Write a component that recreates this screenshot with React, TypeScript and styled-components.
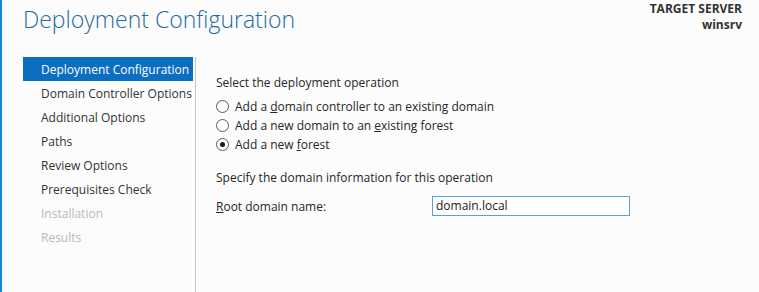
import React from "react";
import styled, { createGlobalStyle } from "styled-components";

const Global = createGlobalStyle`
  html, body { margin: 0; padding: 0; background: #fcfcfc; }
  body { font-family: "Open Sans", "Noto Sans", sans-serif; }
`;

const Window = styled.div`
  width: 759px;
  height: 292px;
  box-sizing: border-box;
  border-left: 2px solid #1688da;
  background: #fcfcfc;
  display: flex;
  flex-direction: column;
  overflow: hidden;
  color: #262626;
`;

const Header = styled.header`
  display: flex;
  justify-content: space-between;
  align-items: flex-start;
  height: 57px;
  padding: 0 17px 0 21px;
`;

const Title = styled.h1`
  margin: 0;
  padding-top: 3px;
  font-size: 23px;
  font-weight: 300;
  color: #1f6aa0;
  line-height: 32px;
`;

const Target = styled.div`
  display: flex;
  flex-direction: column;
  align-items: flex-end;
  font-size: 12px;
  font-weight: 700;
  line-height: 16px;
  padding-top: 1px;
  color: #333;
`;

const Body = styled.div`
  flex: 1;
  display: flex;
  padding-left: 21px;
`;

const Nav = styled.nav`
  width: 170px;
  display: flex;
  flex-direction: column;
  margin-right: 2px;
`;

const NavItem = styled.div<{ $active?: boolean; $disabled?: boolean }>`
  height: 24px;
  line-height: 26px;
  padding-left: 18px;
  font-size: 12px;
  white-space: nowrap;
  background: ${(p) => (p.$active ? "#0b6ebe" : "transparent")};
  color: ${(p) => (p.$active ? "#ffffff" : p.$disabled ? "#b8b8b8" : "#333333")};
`;

const Content = styled.main`
  flex: 1;
  border-left: 1px solid #c6c6c6;
  padding: 18px 0 0 20px;
  font-size: 12px;
  color: #262626;
`;

const Label = styled.div`
  line-height: 16px;
`;

const RadioGroup = styled.div`
  display: flex;
  flex-direction: column;
  margin: 6px 0 16px;
`;

const RadioRow = styled.label`
  display: flex;
  align-items: center;
  height: 19px;
  line-height: 19px;
  gap: 6px;
`;

const RadioDot = styled.span<{ $checked?: boolean }>`
  width: 11px;
  height: 11px;
  border: 1px solid #5a5a5a;
  border-radius: 50%;
  background: #ffffff;
  box-sizing: content-box;
  display: flex;
  align-items: center;
  justify-content: center;
  &::after {
    content: "";
    width: 5px;
    height: 5px;
    border-radius: 50%;
    background: ${(p) => (p.$checked ? "#1a1a1a" : "transparent")};
  }
`;

const Key = styled.span`
  text-decoration: underline;
`;

const FieldRow = styled.div`
  display: flex;
  align-items: center;
  margin-top: 10px;
`;

const FieldLabel = styled.div`
  width: 216px;
`;

const Input = styled.div`
  width: 193px;
  height: 18px;
  border: 1px solid #5b9ddf;
  background: #ffffff;
  line-height: 18px;
  padding-left: 3px;
  font-size: 12px;
  color: #1a1a1a;
`;

const steps = [
  { label: "Deployment Configuration", active: true },
  { label: "Domain Controller Options" },
  { label: "Additional Options" },
  { label: "Paths" },
  { label: "Review Options" },
  { label: "Prerequisites Check" },
  { label: "Installation", disabled: true },
  { label: "Results", disabled: true },
];

export default function App() {
  return (
    <>
      <Global />
      <Window>
        <Header>
          <Title>Deployment Configuration</Title>
          <Target>
            <span>TARGET SERVER</span>
            <span>winsrv</span>
          </Target>
        </Header>
        <Body>
          <Nav>
            {steps.map((s) => (
              <NavItem key={s.label} $active={s.active} $disabled={s.disabled}>
                {s.label}
              </NavItem>
            ))}
          </Nav>
          <Content>
            <Label>Select the deployment operation</Label>
            <RadioGroup>
              <RadioRow>
                <RadioDot />
                <span>
                  Add a <Key>d</Key>omain controller to an existing domain
                </span>
              </RadioRow>
              <RadioRow>
                <RadioDot />
                <span>
                  Add a new domain to an <Key>e</Key>xisting forest
                </span>
              </RadioRow>
              <RadioRow>
                <RadioDot $checked />
                <span>
                  Add a new <Key>f</Key>orest
                </span>
              </RadioRow>
            </RadioGroup>
            <Label>Specify the domain information for this operation</Label>
            <FieldRow>
              <FieldLabel>
                <Key>R</Key>oot domain name:
              </FieldLabel>
              <Input>domain.local</Input>
            </FieldRow>
          </Content>
        </Body>
      </Window>
    </>
  );
}
